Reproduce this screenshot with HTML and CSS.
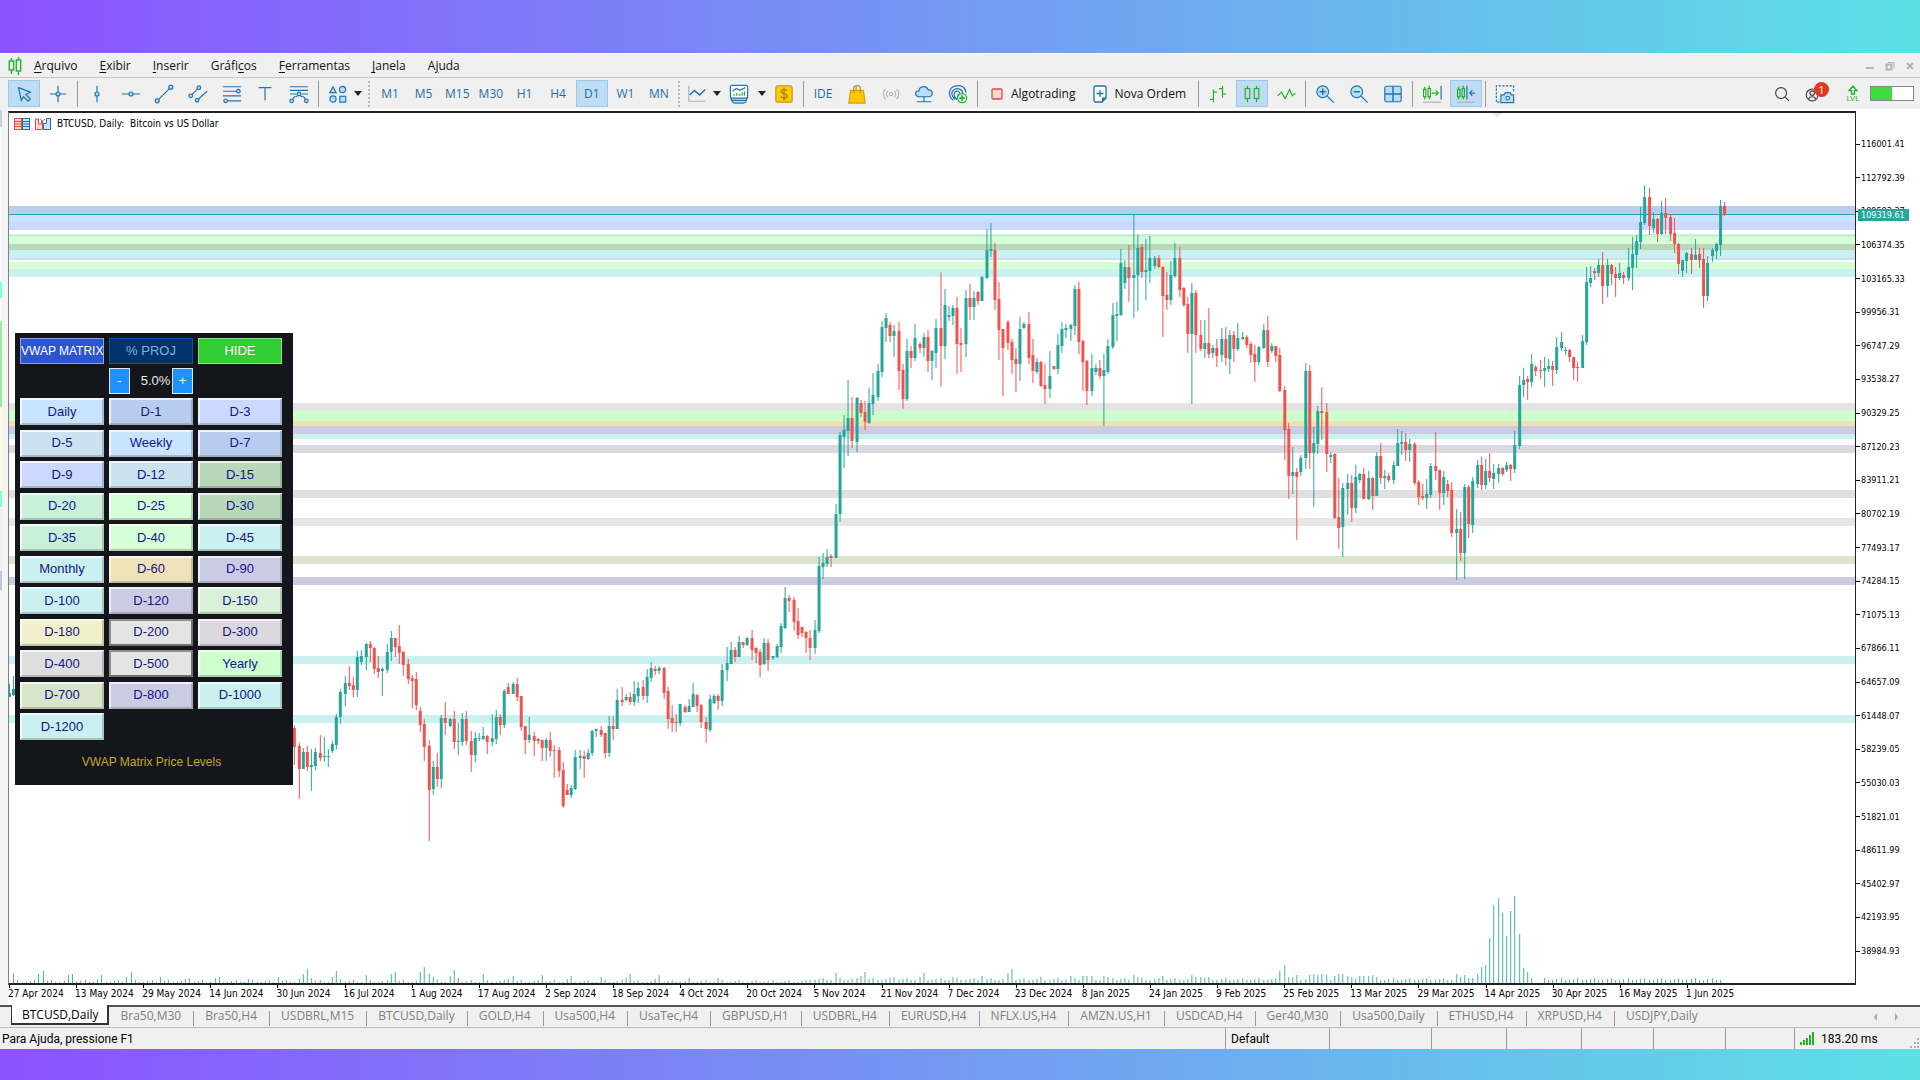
FILE: index.html
```html
<!DOCTYPE html>
<html lang="pt">
<head>
<meta charset="utf-8">
<title>BTCUSD, Daily</title>
<link rel="stylesheet" href="styles.css">
</head>
<body>
<div class="desktop">
<div class="app">
  <header class="menubar">
    <svg class="logo" width="14" height="18" viewBox="0 0 14 18" fill="none" stroke="#1fb428" stroke-width="1.4"><path d="M3.5 1v3M3.5 13v4M10.5 0v3M10.5 14v4"/><rect x="1.2" y="4" width="4.4" height="9"/><rect x="8.3" y="3" width="4.4" height="11"/></svg>
    <nav class="menu">
      <a href="#"><u>A</u>rquivo</a><a href="#"><u>E</u>xibir</a><a href="#"><u>I</u>nserir</a><a href="#">Gráfi<u>c</u>os</a><a href="#"><u>F</u>erramentas</a><a href="#"><u>J</u>anela</a><a href="#">A<u>j</u>uda</a>
    </nav>
    <div class="window-controls">
      <button aria-label="Minimizar"><svg width="10" height="10" viewBox="0 0 10 10"><path d="M1 7h8" stroke="#b4b4b4" stroke-width="2"/></svg></button>
      <button aria-label="Restaurar"><svg width="10" height="10" viewBox="0 0 10 10" fill="none" stroke="#b4b4b4"><path d="M3 1.500h6v6"/><rect x="1.500" y="3.500" width="5" height="5" stroke-width="2"/></svg></button>
      <button aria-label="Fechar"><svg width="10" height="10" viewBox="0 0 10 10"><path d="M2 2l6 6M8 2l-6 6" stroke="#b4b4b4" stroke-width="2"/></svg></button>
    </div>
  </header>

  <div class="toolbar">
    <div class="group g-cursor">
      <button class="tool on" aria-label="Cursor"><svg viewBox="0 0 22 22"><path class="fillb" d="M5 4l13 5-5 2.500 5 5-2.500 2.500-5-5-2.500 4z"/></svg></button>
      <button class="tool" aria-label="Mira"><svg viewBox="0 0 22 22"><path d="M11 2v7M11 13v7M2 11h7M13 11h7"/><circle class="fillb" cx="11" cy="11" r="2.200"/></svg></button>
    </div>
    <i class="sep"></i>
    <div class="group g-draw">
      <button class="tool" aria-label="Linha vertical"><svg viewBox="0 0 22 22"><path d="M11 2v7M11 13v7"/><circle class="fillb" cx="11" cy="11" r="2.200"/></svg></button>
      <button class="tool" aria-label="Linha horizontal"><svg viewBox="0 0 22 22"><path d="M1 11h8M13 11h8"/><circle class="fillb" cx="11" cy="11" r="2.200"/></svg></button>
      <button class="tool" aria-label="Linha de tendência"><svg viewBox="0 0 22 22"><path d="M5 17L17 5"/><circle class="fillb" cx="3.500" cy="18.500" r="2.200"/><circle class="fillb" cx="18.500" cy="3.500" r="2.200"/></svg></button>
      <button class="tool" aria-label="Canal"><svg viewBox="0 0 22 22"><path d="M4 12l7-7M11 17l10-9"/><circle class="fillb" cx="3" cy="13" r="2"/><circle class="fillb" cx="12" cy="4" r="2"/><circle class="fillb" cx="10" cy="18" r="2"/></svg></button>
      <button class="tool" aria-label="Fibonacci"><svg viewBox="0 0 22 22"><path d="M1 3h20M1 8h15M1 13h20M6 18.500h15"/><circle class="fillb" cx="18" cy="8" r="2"/><circle class="fillb" cx="4" cy="18.500" r="2"/></svg></button>
      <button class="tool" aria-label="Texto"><svg viewBox="0 0 22 22"><path d="M4 4h14M11 4v14"/></svg></button>
      <button class="tool" aria-label="Padrões"><svg viewBox="0 0 22 22"><path d="M1 3h20M1 7h20M1 11h7M14 11h7M3 18l3-4h2l3-3 3 3h2l3 4"/><circle class="fillb" cx="11" cy="11" r="2"/><circle class="fillb" cx="3" cy="18.500" r="2"/><circle class="fillb" cx="19" cy="18.500" r="2"/></svg></button>
    </div>
    <i class="sep"></i>
    <div class="group g-shapes">
      <button class="tool" aria-label="Formas"><svg viewBox="0 0 22 22"><path class="fillb" d="M5.500 3l3.500 6.500H2z"/><circle class="fillb" cx="16" cy="6" r="3.400"/><circle class="fillb" cx="5.500" cy="16.500" r="3.400"/><rect class="fillb" x="13" y="13.500" width="6.500" height="6.500"/></svg></button>
      <button class="caret" aria-label="Mais formas"></button>
    </div>
    <i class="grip"></i>
    <div class="group g-period">
      <button class="tool">M1</button><button class="tool">M5</button><button class="tool">M15</button><button class="tool">M30</button><button class="tool">H1</button><button class="tool">H4</button><button class="tool on">D1</button><button class="tool">W1</button><button class="tool">MN</button>
    </div>
    <i class="grip"></i>
    <div class="group g-chart">
      <button class="tool narrow" aria-label="Tipo de gráfico"><svg viewBox="0 0 22 22"><path d="M2 2v17h18" stroke="#b0b0b0"/><path d="M3 12l5-5 6 5 6-6" stroke-width="1.600"/></svg></button>
      <button class="caret" aria-label="Tipos"></button>
      <button class="tool" aria-label="Indicadores"><svg viewBox="0 0 22 22"><path d="M2 14c0 4 2 7 4 7h10c2 0 4-3 4-7z" fill="#b7dcf5"/><path d="M3 18h16"/><rect x="1.500" y="1.500" width="19" height="14" rx="1.500" fill="#fff"/><path d="M4 8l4-3 4 2 6-3"/><path d="M5.500 13v-2M8.500 13v-3M11.500 13v-2M14.500 13V9M17 13V8" stroke="#1fb428"/></svg></button>
      <button class="caret" aria-label="Lista de indicadores"></button>
      <button class="tool" aria-label="Símbolos"><svg viewBox="0 0 22 22"><rect x="2" y="2" width="18" height="18" rx="2" fill="#fccb00" stroke="#c99a1c"/><path d="M14.500 7.500c-1-1.800-6-2-6.500.5-.3 3.500 6.500 2 6.500 5.500-.5 2.700-6 2.500-7 .2M11 4v14" stroke="#a8800d" stroke-width="1.500"/></svg></button>
    </div>
    <i class="sep"></i>
    <div class="group g-services">
      <button class="tool">IDE</button>
      <button class="tool" aria-label="Mercado"><svg viewBox="0 0 22 22"><path d="M4 7h14l2 14H2z" fill="#fcc800" stroke="#d9a10c"/><path d="M7.500 10V4c0-3 7-3 7 0v6M10 7V2" stroke="#c08a10"/></svg></button>
      <button class="tool" aria-label="Sinais"><svg viewBox="0 0 22 22" class="muted"><circle cx="11" cy="11" r="1.800"/><path d="M7.500 7.500c-1.800 2-1.800 5 0 7M14.500 7.500c1.800 2 1.800 5 0 7M4.800 5.500c-3 3-3 8 0 11M17.200 5.500c3 3 3 8 0 11"/></svg></button>
      <button class="tool" aria-label="Nuvem"><svg viewBox="0 0 22 22"><path class="fillb" d="M6 14c-6 0-5-7-.5-6.500C6 2 14 1 15.500 6.500c6-.5 6 7.500.5 7.500z"/><path d="M11 14v5M3 19.500h16M9 19.500h4" /></svg></button>
      <button class="tool" aria-label="VPS"><svg viewBox="0 0 22 22"><path d="M6 18C0 14 0 5 7 2.500s13 1.500 12.500 7M8 17c-5-4-5-9-1-11s10 0 9 5M10 17c-4-3-4-7-2-8.500s5-.5 5 2.500M11 15v-4"/><circle cx="15.500" cy="15.500" r="5" fill="#e6f8e6" stroke="#1fb428"/><path d="M15.500 12.500v6M12.500 15.500h6" stroke="#1fb428" stroke-width="1.800"/></svg></button>
    </div>
    <i class="sep"></i>
    <div class="group g-trade">
      <button class="labelled"><svg width="12" height="14" viewBox="0 0 12 14"><rect x="1" y="2" width="10" height="10" rx="1" fill="#fbd7d0" stroke="#e4493b" stroke-width="1.300"/></svg>Algotrading</button>
      <button class="labelled"><svg width="14" height="18" viewBox="0 0 14 18"><path d="M2.500 1h9a1.500 1.500 0 0 1 1.500 1.500V13l-4 4H2.500A1.500 1.500 0 0 1 1 15.500v-13A1.500 1.500 0 0 1 2.500 1z" fill="#fff" stroke="#1e6fa8" stroke-width="1.300"/><path d="M13 12.500H9V17z" fill="#1e6fa8"/><path d="M7 5v7M3.500 8.500h7" stroke="#1e6fa8" stroke-width="1.300"/></svg>Nova Ordem</button>
    </div>
    <i class="sep"></i>
    <div class="group g-three green">
      <button class="tool" aria-label="Barras"><svg viewBox="0 0 22 22"><path d="M6 6v14M2 17h4M6 9h4M16 2v13M12 5h4M16 11h4"/></svg></button>
      <button class="tool on" aria-label="Velas"><svg viewBox="0 0 22 22"><path d="M6 2v3M6 16v4M16 2v3M16 16v4"/><rect x="3.500" y="5" width="5" height="11"/><rect x="13.500" y="5" width="5" height="11"/></svg></button>
      <button class="tool" aria-label="Linha"><svg viewBox="0 0 22 22"><path d="M2 13l4-4 4 7 5-10 3 7 3-3"/></svg></button>
    </div>
    <i class="sep"></i>
    <div class="group g-three">
      <button class="tool" aria-label="Ampliar"><svg viewBox="0 0 22 22"><path d="M13.500 13.500l7 7"/><circle class="fillb" cx="8.500" cy="8.500" r="6.500"/><path d="M8.500 5v7M5 8.500h7" stroke-width="1.600"/></svg></button>
      <button class="tool" aria-label="Reduzir"><svg viewBox="0 0 22 22"><path d="M13.500 13.500l7 7"/><circle class="fillb" cx="8.500" cy="8.500" r="6.500"/><path d="M5 8.500h7" stroke-width="1.600"/></svg></button>
      <button class="tool" aria-label="Grade"><svg viewBox="0 0 22 22"><rect class="fillb" x="2" y="2.500" width="18" height="17" rx="2"/><path d="M11 2.500v17M2 11h18" stroke-width="1.600"/></svg></button>
    </div>
    <i class="sep"></i>
    <div class="group g-cursor">
      <button class="tool" aria-label="Rolagem"><svg viewBox="0 0 22 22"><g stroke="#1fb428"><path d="M3 3v3M3 14v3M8 2v3M8 14v3M11 10h7M15 7l3 3-3 3"/><rect x="1.700" y="6" width="2.600" height="8"/><rect x="6.700" y="5" width="2.600" height="9"/></g><path d="M21 2v15"/><path d="M1 20h20" stroke="#b0b0b0"/></svg></button>
      <button class="tool on" aria-label="Deslocamento"><svg viewBox="0 0 22 22"><g stroke="#1fb428"><path d="M3 3v3M3 14v3M8 2v3M8 14v3"/><rect x="1.700" y="6" width="2.600" height="8"/><rect x="6.700" y="5" width="2.600" height="9"/></g><path d="M12 2v15M21 10h-6M18 7l-3 3 3 3"/><path d="M1 20h20" stroke="#b0b0b0"/></svg></button>
    </div>
    <i class="sep"></i>
    <button class="tool" aria-label="Captura"><svg viewBox="0 0 22 22"><path d="M5 20H1.500V2h19v7" stroke-dasharray="2.500 1.500"/><path class="fillb" d="M7 12h3l1.500-2.500h5L18 12h2.500v8.500h-14V12z"/><circle cx="14" cy="15.500" r="2" fill="#fff"/></svg></button>

    <div class="status-tools">
      <button class="tool" aria-label="Buscar"><svg viewBox="0 0 22 22"><g stroke="#444"><circle cx="10" cy="10" r="6"/><path d="M14.500 14.500l4 4"/></g></svg></button>
      <button class="tool account" aria-label="Conta"><svg viewBox="0 0 22 22"><g stroke="#444"><circle cx="9" cy="12" r="6.500"/><circle cx="9" cy="10" r="2.500"/><path d="M5 17c1-4 7-4 8 0"/></g></svg><span class="badge">1</span></button>
      <div class="lvl"><svg width="12" height="10" viewBox="0 0 12 10" fill="none" stroke="#1fb428" stroke-width="1.300"><path d="M4.500 9V5.500H2L6 1l4 4.500H7.500V9z"/></svg><span>LVL</span></div>
      <div class="battery"><i></i></div>
    </div>
  </div>

  <main class="workspace">
    <aside class="edge"><i class="e1"></i><i class="e2"></i><i class="e5"></i><i class="e8"></i><i class="e3"></i><i class="e4"></i><i class="e5"></i><i class="e6"></i><i class="e7"></i></aside>
    <section class="chart">
      <div class="plot">
        <svg class="series" viewBox="0 0 1847 870" preserveAspectRatio="none" aria-label="BTCUSD">
          <g id="bands"></g>
          <path d="M0 101.500H1847" stroke="#26a69a"/>
          <path d="M1484 0h10l-5 5z" fill="#efe6f3"/>
          <path id="volume" stroke="#45b3a9"/>
          <g id="up" fill="#26a69a"></g>
          <g id="down" fill="#ef5350"></g>
        </svg>
        <h1 class="title">
          <svg width="16" height="12" viewBox="0 0 16 12"><rect x=".5" y=".5" width="7" height="11" fill="#fbd9d5" stroke="#e4493b"/><rect x="8.500" y=".5" width="7" height="11" fill="#c8e4f7" stroke="#1e6fa8"/><path d="M1 3.500h6M1 6h6M1 8.500h6" stroke="#e4493b"/><path d="M9 3.500h6M9 6h6M9 8.500h6" stroke="#1e6fa8"/></svg>
          <svg width="16" height="12" viewBox="0 0 16 12"><path d="M.5 1h3v5h3V3h1v8.500h-7z" fill="#fbd9d5" stroke="#e4493b"/><path d="M15.500.5h-4v5h-3v6h7z" fill="#c8e4f7" stroke="#1e6fa8"/><path d="M5 1l2 2 3-2" stroke="#888" fill="none"/></svg>
          <span>BTCUSD, Daily:&nbsp; Bitcoin vs US Dollar</span>
        </h1>

        <form class="panel" id="panel">
          <div class="row head">
            <button type="button" class="matrix">VWAP MATRIX</button>
            <button type="button" class="proj">% PROJ</button>
            <button type="button" class="hide">HIDE</button>
          </div>
          <div class="row spin">
            <div class="stepper"><button type="button">-</button><output>5.0%</output><button type="button">+</button></div>
          </div>
          <div class="levels">
            <button type="button" class="sky">Daily</button><button type="button" class="blue">D-1</button><button type="button" class="peri">D-3</button>
            <button type="button" class="ice">D-5</button><button type="button" class="sky">Weekly</button><button type="button" class="blue">D-7</button>
            <button type="button" class="peri">D-9</button><button type="button" class="ice">D-12</button><button type="button" class="sage">D-15</button>
            <button type="button" class="mint">D-20</button><button type="button" class="lime">D-25</button><button type="button" class="sage">D-30</button>
            <button type="button" class="mint">D-35</button><button type="button" class="lime">D-40</button><button type="button" class="cyan">D-45</button>
            <button type="button" class="cyan">Monthly</button><button type="button" class="tan">D-60</button><button type="button" class="lav">D-90</button>
            <button type="button" class="cyan">D-100</button><button type="button" class="lav">D-120</button><button type="button" class="pale">D-150</button>
            <button type="button" class="cream">D-180</button><button type="button" class="fog pressed">D-200</button><button type="button" class="slate">D-300</button>
            <button type="button" class="grey">D-400</button><button type="button" class="fog pressed">D-500</button><button type="button" class="year">Yearly</button>
            <button type="button" class="olive">D-700</button><button type="button" class="lav">D-800</button><button type="button" class="cyan">D-1000</button>
            <button type="button" class="cyan">D-1200</button>
          </div>
          <p class="caption">VWAP Matrix Price Levels</p>
        </form>
      </div>
      <div class="prices" id="prices"><b class="last">109319.61</b></div>
      <div class="dates" id="dates"></div>
    </section>
  </main>

  <nav class="tabs" id="tabs"></nav>

  <footer class="statusbar">
    <span class="help">Para Ajuda, pressione F1</span>
    <span class="cell c104">Default</span><span class="cell c102"></span><span class="cell c75"></span><span class="cell c75"></span><span class="cell c72"></span><span class="cell c72"></span><span class="cell c69"></span>
    <span class="cell ping"><svg width="15" height="13" viewBox="0 0 15 13" fill="#1fb428"><path d="M0 10h2v3H0zM3 8h2v5H3zM6 6h2v7H6zM9 3h2v10H9zM12 0h2v13h-2z"/></svg>183.20 ms</span>
    <svg class="resize" width="10" height="10" viewBox="0 0 10 10" fill="#b0b0b0"><path d="M7 0h2v2H7zM4 4h2v2H4zM7 4h2v2H7zM0 8h2v2H0zM4 8h2v2H4zM7 8h2v2H7z"/></svg>
  </footer>
</div>
</div>
<script src="chart.js"></script>
</body>
</html>
```
FILE: styles.css
```css
* { box-sizing: border-box; }

body {
  margin: 0;
  font-family: "Open Sans", "Noto Sans", sans-serif;
  font-size: 12px;
  color: #111;
}

button {
  font: inherit;
  color: inherit;
  border: 0;
  padding: 0;
  margin: 0;
  background: none;
}

a { color: inherit; text-decoration: none; }

.desktop {
  min-height: 100vh;
  padding: 53px 0 31px;
  background: linear-gradient(90deg, #8c52ff, #5ce1e6);
  display: flex;
}

.app {
  flex: 1;
  min-width: 0;
  display: flex;
  flex-direction: column;
  background: #fff;
}

/* Menu bar */
.menubar {
  height: 25px;
  padding: 1px 5px 0 8px;
  display: flex;
  align-items: center;
  background: #f0f0f0;
  border-top: 1px solid #fff;
  border-bottom: 1px solid #c8c8c8;
}
.menu { display: flex; gap: 22px; margin-left: 12px; flex: 1; }
.menu a { line-height: 20px; }
.menu u { text-underline-offset: 2px; }
.window-controls { display: flex; gap: 10px; }
.window-controls button, .window-controls svg { display: block; }

/* Toolbar */
.toolbar {
  height: 31px;
  padding: 0 6px 0 8px;
  display: flex;
  align-items: center;
  background: #f0f0f0;
}
.group { display: flex; justify-content: space-between; flex: none; }
.g-cursor { width: 66px; }
.g-draw { width: 234px; }
.g-shapes { width: 43px; }
.g-period { width: 301px; }
.g-chart { width: 116px; }
.g-services { width: 167px; }
.g-trade { width: 214px; padding: 0 9px 0 10px; color: #111; }
.g-three { width: 100px; }

.tool {
  width: 32px;
  height: 27px;
  flex: none;
  display: flex;
  align-items: center;
  justify-content: center;
  color: #1e6fa8;
}
.tool svg {
  width: 20px;
  height: 20px;
  fill: none;
  stroke: #1e74ae;
  stroke-width: 1.3;
}
.tool .fillb { fill: #b9defa; }
.tool .muted { stroke: #b8b8b8; }
.green .tool svg { stroke: #1fb428; }
.tool.on { background: #bfdcf3; border: 1px solid #98c9f0; }
.g-chart .narrow { width: 26px; }
.caret { width: 12px; height: 27px; flex: none; }
.caret::after {
  content: "";
  display: block;
  margin: 0 auto;
  width: 0;
  border: 4px solid transparent;
  border-top: 5px solid #222;
  border-bottom: 0;
}
.g-shapes { padding-right: 3px; }
.g-shapes .caret { width: 8px; }
.labelled { display: flex; align-items: center; gap: 8px; height: 27px; }

.sep { width: 7px; height: 26px; flex: none; }
.sep::after { content: ""; display: block; width: 1px; height: 26px; margin: 0 3px; background: #999; }
.grip { width: 9px; height: 26px; flex: none; }
.grip::after { content: ""; display: block; height: 26px; width: 2px; margin: 0 3px; border-left: 2px dotted #b8b8b8; }

.status-tools { margin-left: auto; display: flex; align-items: center; }
.account { position: relative; }
.badge {
  position: absolute;
  left: 16px;
  top: 2px;
  width: 15px;
  height: 15px;
  border-radius: 50%;
  background: #e03a20;
  color: #fff;
  font-size: 11px;
  line-height: 15px;
}
.lvl {
  width: 14px;
  margin: 0 10px 0 16px;
  display: flex;
  flex-direction: column;
  align-items: center;
  color: #1fb428;
  font-family: Roboto, sans-serif;
  font-size: 8px;
  line-height: 8px;
}
.battery { width: 44px; height: 15px; border: 1px solid #888; background: #fff; }
.battery i { display: block; width: 21px; height: 13px; background: #3ddc3d; }

/* Workspace */
.workspace { flex: 1; display: flex; min-height: 0; }
.edge {
  width: 8px;
  padding: 1px 6px 0 0;
  background: #f4f4f4;
  display: flex;
  flex-direction: column;
  flex: none;
}
.e1 { height: 17px; background: #c5d0e0; }
.e2 { height: 155px; background: #fbfbfb; }
.e3 { height: 86px; background: #99f099; }
.e4 { height: 84px; background: #fbf8dc; }
.e5 { height: 16px; background: #7fffd4; }
.e6 { height: 64px; background: #f0f0f0; }
.e7 { height: 19px; background: #bccadb; }
.e8 { height: 23px; background: #fbfbfb; }

.chart {
  flex: 1;
  min-width: 0;
  margin-top: 2px;
  display: grid;
  grid-template: minmax(0, 1fr) 20px / minmax(0, 1fr) 64px;
}
.plot {
  position: relative;
  border: solid #222;
  border-width: 2px 1px 2px 1px;
  border-left-color: #808080;
  min-height: 600px;
}
.series { position: absolute; inset: 0; width: 100%; height: 100%; }
.title {
  position: relative;
  margin: 0;
  padding: 4px 5px;
  display: flex;
  align-items: center;
  gap: 5px;
  font: 10px/14px "DejaVu Sans Condensed", "DejaVu Sans", sans-serif;
  color: #000;
}
.title svg + svg { margin-right: 1px; }

.prices {
  position: relative;
  padding: 26px 0 27px;
  display: flex;
  flex-direction: column;
  justify-content: space-between;
  font: 9px/14px "DejaVu Sans Condensed", "DejaVu Sans", sans-serif;
  color: #000;
}
.prices span { display: flex; align-items: center; gap: 1px; }
.prices span::before { content: ""; width: 4px; height: 1px; background: #000; }
.last {
  position: absolute;
  left: 2px;
  top: 98px;
  width: 51px;
  padding-left: 3px;
  background: #26a69a;
  color: #fff;
  font-weight: 400;
  line-height: 12px;
}

.dates {
  display: grid;
  grid-template-columns: repeat(26, minmax(0, 1fr));
  padding-right: 103px;
  font: 10px/11px "DejaVu Sans Condensed", "DejaVu Sans", sans-serif;
  color: #000;
}
.dates span { white-space: nowrap; }
.dates span::before { content: ""; display: block; width: 1px; height: 3px; margin-left: 1px; background: #000; }

/* Price levels panel */
.panel {
  position: absolute;
  left: 6px;
  top: 220px;
  width: 278px;
  height: 452px;
  padding: 5px 10px 0 5px;
  background: #15161b;
  font: 13px/16px "Liberation Sans", Arial, sans-serif;
}
.row, .levels { display: grid; grid-template-columns: repeat(3, 84px); column-gap: 5px; }
.row button { height: 26px; border: 1px solid #7fa6f5; color: #fff; overflow: hidden; white-space: nowrap; }
.row .matrix { background: #2d55d2; font-size: 12px; }
.row .proj { background: #003468; border-color: #0a55a8; color: #78b4e6; }
.row .hide { background: #32cd32; border-color: #7de67d; }
.spin { margin-top: 4px; }
.stepper {
  grid-column: 2;
  display: flex;
  align-items: center;
  justify-content: space-between;
  color: #e8e8e8;
}
.stepper button { width: 21px; background: #1e90ff; border-color: #d5eaff; }
.stepper output { padding-left: 9px; }
.levels { margin-top: 4px; height: 342px; align-content: space-between; }
.levels button {
  height: 27px;
  color: #14148c;
  border: 2px solid;
  border-color: rgba(255, 255, 255, .7) rgba(90, 90, 90, .3) rgba(90, 90, 90, .3) rgba(255, 255, 255, .7);
}
.levels .pressed { border-color: #909090 #707070 #707070 #909090; }
.sky { background-color: #c9e4ff; }
.blue { background-color: #b9cdf0; }
.peri { background-color: #cbd8ff; }
.ice { background-color: #cbe3f0; }
.sage { background-color: #b9d8ba; }
.mint { background-color: #c9f0d8; }
.lime { background-color: #d7ffd7; }
.cyan { background-color: #caf1ef; }
.tan { background-color: #f0e2b8; }
.lav { background-color: #cbcbe4; }
.pale { background-color: #d9f0d9; }
.cream { background-color: #f0f0cb; }
.fog { background-color: #e4e4e4; }
.slate { background-color: #d9d9df; }
.grey { background-color: #dedede; }
.year { background-color: #ccffcc; }
.olive { background-color: #d9e5cb; }
.caption { margin: 14px 0 0; text-align: center; font-size: 12px; color: #c5a52e; }

/* Chart tabs */
.tabs {
  height: 23px;
  padding: 0 20px 0 11px;
  display: flex;
  align-items: flex-start;
  background: #f0f0f0;
  border-top: 2px solid #555;
  border-bottom: 1px solid #bbb;
  font-size: 12px;
  line-height: 16px;
  color: #808080;
}
.tabs a { position: relative; padding: 1px 12px 0; white-space: nowrap; }
.tabs a + a + a::before { content: ""; position: absolute; left: 0; top: 4px; width: 1px; height: 15px; background: #999; }
.tabs .active {
  margin-top: -2px;
  padding: 2px 8px 0 10px;
  height: 20px;
  background: #fff;
  color: #000;
  border: solid #333;
  border-width: 0 2px 2px 1px;
}
.arrows { margin-left: auto; display: flex; gap: 12px; padding-top: 5px; }
.arrows button, .arrows svg { display: block; }

/* Status bar */
.statusbar {
  position: relative;
  height: 21px;
  display: flex;
  align-items: stretch;
  background: #f0f0f0;
  font: 12px/22px Roboto, sans-serif;
  color: #000;
}
.help { flex: 1; padding-left: 2px; }
.cell { border-left: 1px solid #999; padding-left: 5px; }
.c104 { width: 104px; }
.c102 { width: 102px; }
.c75 { width: 75px; }
.c72 { width: 72px; }
.c69 { width: 69px; }
.ping { width: 126px; display: flex; align-items: center; gap: 6px; }
.resize { position: absolute; right: 0; bottom: 1px; }
```
FILE: chart.js
```js
// Candles: direction, then high, body top, body bottom, low in thirds of a pixel.
// Each block starts at a bar index and a vertical origin.
const STEP = 4.196;
const blocks = [
  { start: 0, origin: 572, rows: `G0 28 38 38|G-24 14 34 36` },
  { start: 68, origin: 448, rows: `R495 504 561 614|R548 557 627 717|G564 577 627 627|R558 577 621 633|G568 615 621 693|G564 577 618 630|R525 580 593 603|G530 588 592 606|G568 588 592 621|G543 552 573 579|G463 470 555 567|G388 397 472 492|G347 369 401 438|R318 369 377 391|R350 375 391 412|G274 290 391 410|G271 288 306 315|G249 252 291 331|R243 252 264 306|R262 263 327 341|R287 323 336 353|G321 328 334 407|G252 275 331 338|G213 234 276 303|R233 234 262 291|R195 258 278 312|R274 275 315 347|R297 312 357 371|R344 353 362 444|R335 357 436 450|R441 453 495 517|R476 491 561 602|R540 558 690 842|G602 621 687 706|R580 621 656 680|G466 473 656 684|R426 473 488 526|G473 477 498 501|R454 477 546 567|G488 542 546 586|G460 477 546 559|R454 477 542 555|R513 543 585 637|G515 533 586 605|G519 533 538 542|G501 527 537 540|R524 527 546 582|G463 534 546 557|G450 470 537 552|R463 470 495 524|G388 394 495 504|R369 381 402 402|G366 372 402 402|R353 372 412 422|R408 409 501 513|R498 499 540 581|G472 526 540 548|R515 527 542 587|R534 537 543 552|R540 540 564 602|G533 539 564 602|R516 540 573 591|R555 569 574 654|R562 570 633 650|R605 630 738 743|R671 690 704 706|G676 684 704 713|G570 590 687 690|G570 588 594 627|R573 588 597 654|G568 578 597 600|G510 513 580 587|G507 508 514 532|R498 510 524 530|R519 520 578 593|G467 498 578 591|R467 498 507 540|G388 420 507 507|R381 419 426 438|G403 412 419 422|R397 412 426 435|G363 403 426 438|G366 384 409 429|R360 381 407 419|G328 350 407 429|G306 325 353 366|R319 328 333 344|G319 325 333 341|R322 324 398 416|R381 394 477 507|R435 475 488 515|R463 485 490 517|G432 432 489 498|R435 441 455 460|G416 438 455 457|G369 403 441 441|R403 404 438 457|R432 435 486 504|R470 485 508 548|G405 416 511 517|G401 408 430 432|R403 408 423 450|G313 330 423 438|G262 309 331 363|G246 271 312 313|R262 271 291 306|G228 246 291 291|R246 247 256 263|G231 234 256 258|R210 234 270 300|R262 265 278 310|R268 275 316 350|G234 249 313 316|R237 249 300 332|G287 288 294 300|G253 259 291 294|G190 199 262 278` },
  { start: 185, origin: 88, rows: `G1162 1194 1283 1288|R1185 1193 1203 1236|R1191 1200 1267 1292|R1225 1263 1304 1316|R1281 1282 1298 1310|R1294 1295 1314 1358|R1291 1313 1345 1380|G1260 1289 1345 1361|G1071 1097 1292 1300|G1059 1090 1100 1137|G1046 1071 1093 1102|R1061 1067 1075 1100|G912 941 1074 1075|G697 706 942 965|G645 690 710 804|G539 653 693 769|R591 653 724 744|G590 593 725 756|R599 608 639 650|R602 636 665 690|G564 608 669 672|G519 586 611 644|G491 513 592 602|G363 381 517 530|G340 353 385 427|R366 375 407 426|G375 393 407 470|R366 394 514 571|R491 511 597 628|G416 454 597 602|R438 453 473 504|G372 413 473 483|R426 431 444 458|G400 410 444 470|R390 410 483 515|G449 454 483 540|G356 384 458 504|R217 384 438 561|G267 315 438 477|G318 344 350 363|G315 324 347 375|R291 324 432 521|R385 429 435 517|G271 293 432 470|R252 293 321 360|G274 293 321 360|R274 275 303 315|G227 230 303 303|G88 149 234 237|G69 146 152 171|R128 149 299 331|R246 296 391 480|R387 387 444 587|R360 366 429 450|R416 426 479 521|R444 476 492 577|G350 387 492 542|G366 373 385 388|R337 372 473 492|R416 466 514 549|G473 486 517 521|R482 486 558 561|R491 554 567 612|G454 529 567 593|R498 498 508 510|G403 435 507 521|G366 387 438 460|G372 384 390 413|G372 375 388 422|G256 268 378 404|R246 268 425 461|R420 423 486 573|R479 482 573 615|G463 504 573 587|G491 504 517 526|R479 504 527 536|G463 511 527 678|G416 438 515 521|G309 344 441 446|G306 341 347 422|G148 189 346 347|G180 202 249 268|R136 202 234 306|G42 225 234 353|G104 145 225 334|R133 142 215 234|G117 209 215 299|G108 174 212 249|G168 173 199 208|R165 174 202 203|R198 200 287 410|R215 284 300 331|G183 225 300 315|G129 174 228 234|R142 174 271 291|R262 265 315 321|R291 312 401 458|G249 278 401 612|R271 278 406 458|R360 406 447 454|G360 429 447 473|R325 429 463 473|G435 444 459 473|R416 444 467 501|G384 416 466 486|R381 416 475 498|G391 405 476 523|R394 404 447 486|G369 413 447 454|G397 410 416 419|R404 410 435 444|R426 432 466 489|R435 463 486 546|G438 441 486 495|G373 391 444 447|R347 391 486 501|G429 438 454 458|R438 438 469 486|R444 466 574 577|R558 571 690 779|R669 687 829 898|G741 816 829 882|R804 816 832 1021|G766 773 816 829|G489 514 774 806|R495 514 759 806|G681 729 759 920|G618 633 732 763|R561 633 639 719|R609 636 763 816|G757 765 770 788|R760 763 954 957|R835 951 983 1046|G848 864 980 1071|G823 848 867 945|R826 848 923 967|G795 831 923 938|G820 822 840 848|R804 822 898 898|G813 835 898 901|R832 835 888 930|G757 769 888 889|R729 767 835 851|G811 829 835 867|R819 829 841 845|G782 795 840 851|G687 729 797 798|G693 725 732 766|R699 725 750 782|G717 732 750 785|R726 731 848 854|R840 845 891 914|R851 888 894 901|G838 882 894 926|G788 797 886 895|R697 797 813 841|R810 811 879 930|G813 832 879 914|R841 853 873 892|R845 870 998 1011|G927 987 998 1140|R936 987 1058 1083|G851 861 1058 1137|R854 860 973 1014|G832 842 974 998|G779 795 851 863|R772 795 855 870|G778 814 855 867|R759 814 834 845|G792 820 836 867|G792 804 823 849|R801 804 823 829|G785 795 810 815|R793 795 807 842|G693 735 807 819|G527 555 738 746|G505 540 555 590|R527 537 546 600|G463 492 545 561|R495 501 513 527|R479 510 513 536|G470 504 513 561|G476 498 507 517|R482 498 510 558|G412 441 510 523|G397 426 445 454|G441 450 453 466|R448 450 471 486|R470 471 504 539|R486 501 505 545|G406 423 504 505|G202 246 425 434|G199 233 249 261|R205 212 218 239|G177 196 218 230|R155 196 258 312|G177 196 258 290|R192 196 223 255|R202 221 234 290|G189 218 234 240|R217 225 234 252|G145 202 234 242|G111 161 205 271|G105 123 164 205|G22 66 126 148|G-44 -9 69 76|R-37 -9 79 104|G35 57 85 98|R54 57 101 126|G3 38 101 104|R-6 38 54 101|R43 51 101 123|R54 98 132 158|R129 132 192 221|G180 181 214 230|G157 158 183 218|R145 161 180 221|G117 164 180 180|R145 161 180 205|R145 177 287 325|G167 189 287 302|G145 151 168 186|G129 132 154 176|G0 19 136 167|R7 19 46 48` }
];
const up = document.getElementById('up');
const down = document.getElementById('down');
const paths = { G: '', R: '' };
for (const block of blocks) {
  block.rows.split('|').forEach((row, k) => {
    const [h, t, b, l] = row.slice(1).split(' ').map(v => Math.round(block.origin + v / 3) - 1);
    const x = Math.max(0, Math.round((block.start + k) * STEP));
    const bottom = Math.max(b, t + 1);
    paths[row[0]] += `M${x} ${h}h1V${l}h-1zM${x - 1} ${t}h3V${bottom}h-3z`;
  });
}
for (const [key, target] of [['G', up], ['R', down]]) {
  const p = document.createElementNS('http://www.w3.org/2000/svg', 'path');
  p.setAttribute('d', paths[key]);
  target.append(p);
}

// Price level bands: top, height, colour.
const bands = [
  [93, 9, '#b9cdf0'], [102, 7, '#c9e2fd'], [108, 9, '#cbd8ff'], [121, 3, '#c9f0d8'],
  [124, 7, '#d7ffd7'], [131, 6, '#b9d8ba'], [137, 8, '#caf1ef'], [145, 2, '#cbe0ee'],
  [149, 7, '#d7ffd7'], [156, 8, '#caf1ef'], [290, 8, '#e4e4e4'], [298, 10, '#ccffcc'],
  [308, 5, '#f0e2b8'], [313, 8, '#cbcbe4'], [321, 5, '#caf1ef'], [332, 8, '#d9d9df'],
  [377, 8, '#e0e0e0'], [405, 8, '#e6e6e6'], [443, 8, '#d9e5cd'], [464, 8, '#cbcbe4'],
  [543, 8, '#caf1ef'], [602, 8, '#caf1ef']
];
document.getElementById('bands').innerHTML = bands
  .map(([y, h, c]) => `<rect x="0" y="${y}" width="1847" height="${h}" fill="${c}"/>`).join('');

// Tick volume: notable bars by index, the rest stay low.
const peaks = { 1: 10, 7: 9, 8: 12, 14: 8, 15: 9, 21: 4, 22: 8, 28: 6, 29: 11, 36: 6, 42: 4, 43: 5, 49: 5, 50: 6, 57: 4, 64: 6, 69: 4, 70: 9, 71: 14, 72: 5, 77: 6, 78: 12, 79: 4, 85: 8, 91: 9, 92: 11, 98: 11, 99: 16, 100: 9, 101: 6, 105: 7, 106: 13, 107: 5, 113: 9, 119: 4, 120: 7, 127: 8, 133: 4, 134: 7, 141: 6, 147: 5, 148: 9, 154: 4, 155: 8, 162: 5, 169: 5, 193: 4, 197: 10, 203: 7, 204: 11, 211: 6, 217: 6, 218: 10, 225: 6, 232: 7, 238: 10, 239: 14, 246: 6, 253: 7, 256: 7, 257: 7, 258: 7, 261: 7, 262: 6, 263: 5, 268: 8, 269: 6, 275: 7, 282: 8, 283: 6, 284: 6, 285: 5, 286: 6, 303: 12, 304: 18, 305: 6, 306: 6, 307: 8, 310: 8, 311: 9, 312: 8, 313: 9, 314: 8, 316: 7, 317: 9, 318: 9, 319: 7, 320: 6, 322: 7, 323: 7, 324: 7, 325: 8, 326: 6, 345: 9, 346: 6, 347: 8, 348: 5, 349: 5, 350: 9, 351: 16, 352: 18, 353: 45, 354: 78, 355: 85, 356: 70, 357: 47, 358: 72, 359: 87, 360: 49, 361: 15, 362: 11, 363: 5 };
let vol = '';
for (let i = 1; i < 409; i++) {
  if (i > 363 && i < 366) continue;
  const base = i > 190 ? 3 : 1;
  const h = peaks[i] || base + (i * 7 + (i >> 2) * 5) % 3;
  vol += `M${Math.round(i * STEP) + 0.5} 870v-${h}`;
}
document.getElementById('volume').setAttribute('d', vol);

const prices = document.getElementById('prices');
for (let i = 0; i < 25; i++) {
  const s = document.createElement('span');
  s.textContent = (116001.41 - i * 3209.02).toFixed(2);
  prices.append(s);
}

document.getElementById('dates').innerHTML = ['27 Apr 2024', '13 May 2024', '29 May 2024', '14 Jun 2024', '30 Jun 2024', '16 Jul 2024', '1 Aug 2024', '17 Aug 2024', '2 Sep 2024', '18 Sep 2024', '4 Oct 2024', '20 Oct 2024', '5 Nov 2024', '21 Nov 2024', '7 Dec 2024', '23 Dec 2024', '8 Jan 2025', '24 Jan 2025', '9 Feb 2025', '25 Feb 2025', '13 Mar 2025', '29 Mar 2025', '14 Apr 2025', '30 Apr 2025', '16 May 2025', '1 Jun 2025']
  .map(d => `<span>${d}</span>`).join('');

document.getElementById('tabs').innerHTML = ['BTCUSD,Daily', 'Bra50,M30', 'Bra50,H4', 'USDBRL,M15', 'BTCUSD,Daily', 'GOLD,H4', 'Usa500,H4', 'UsaTec,H4', 'GBPUSD,H1', 'USDBRL,H4', 'EURUSD,H4', 'NFLX.US,H4', 'AMZN.US,H1', 'USDCAD,H4', 'Ger40,M30', 'Usa500,Daily', 'ETHUSD,H4', 'XRPUSD,H4', 'USDJPY,Daily']
  .map((t, i) => `<a href="#"${i ? '' : ' class="active"'}>${t}</a>`).join('') +
  '<span class="arrows"><button aria-label="Anterior"><svg width="8" height="10" viewBox="0 0 8 10"><path d="M5 1L2 5l3 4z" fill="#aaa"/></svg></button><button aria-label="Próximo"><svg width="8" height="10" viewBox="0 0 8 10"><path d="M3 1l3 4-3 4z" fill="#aaa"/></svg></button></span>';
```
